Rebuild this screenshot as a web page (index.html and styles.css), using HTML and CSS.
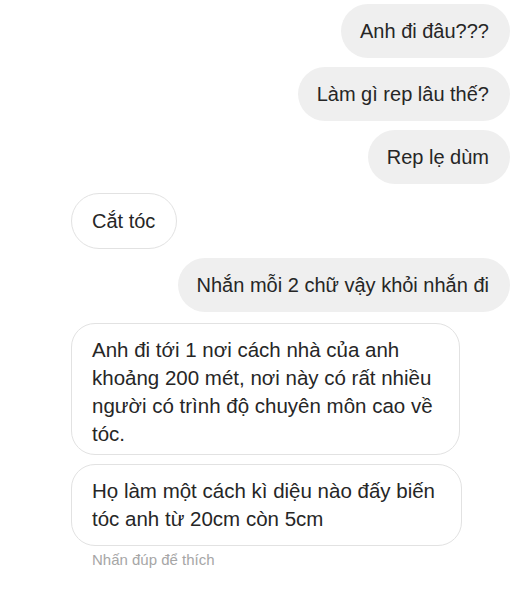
FILE: index.html
```html
<!DOCTYPE html>
<html lang="vi">
<head>
<meta charset="utf-8">
<link rel="stylesheet" href="styles.css">
</head>
<body>
<div class="chat">
  <div class="row out"><div class="bubble gray">Anh đi đâu???</div></div>
  <div class="row out"><div class="bubble gray">Làm gì rep lâu thế?</div></div>
  <div class="row out"><div class="bubble gray">Rep lẹ dùm</div></div>
  <div class="row in"><div class="bubble white">Cắt tóc</div></div>
  <div class="row out"><div class="bubble gray">Nhắn mỗi 2 chữ vậy khỏi nhắn đi</div></div>
  <div class="row in first-long">
    <div class="bubble white multi w1">
      <span class="ln">Anh đi tới 1 nơi cách nhà của anh</span>
      <span class="ln">khoảng 200 mét, nơi này có rất nhiều</span>
      <span class="ln">người có trình độ chuyên môn cao về</span>
      <span class="ln">tóc.</span>
    </div>
  </div>
  <div class="row in">
    <div class="bubble white multi w2">
      <span class="ln">Họ làm một cách kì diệu nào đấy biến</span>
      <span class="ln">tóc anh từ 20cm còn 5cm</span>
    </div>
  </div>
  <div class="hint">Nhấn đúp để thích</div>
</div>
</body>
</html>
```

FILE: styles.css
```css
html, body {
  margin: 0;
  padding: 0;
  background: #ffffff;
}
body {
  width: 526px;
  height: 590px;
  overflow: hidden;
  font-family: "Liberation Sans", Arial, sans-serif;
  color: #262626;
}
.chat {
  display: flex;
  flex-direction: column;
  gap: 9px;
  padding: 4px 16px 0 71px;
}
.row {
  display: flex;
}
.row.out {
  justify-content: flex-end;
}
.row.in {
  justify-content: flex-start;
}
.row.first-long {
  margin-top: 2px;
}
.bubble {
  font-size: 20px;
  line-height: 30px;
  height: 54px;
  padding: 12px 21px 12px 19px;
  border-radius: 28px;
  white-space: nowrap;
  box-sizing: border-box;
}
.bubble.gray {
  background: #efefef;
}
.bubble.white {
  background: #ffffff;
  border: 1px solid #e2e2e2;
  height: 56px;
  padding: 12px 21px 12px 20px;
}
.bubble.white.multi {
  font-size: 20.5px;
  border-radius: 24px;
  line-height: 28px;
  display: flex;
  flex-direction: column;
}
.ln {
  display: block;
  height: 28px;
}
.bubble.multi.w1 {
  width: 389px;
  height: 132px;
  padding: 12px 20px 6px;
}
.bubble.multi.w2 {
  width: 391px;
  height: 82px;
  padding: 12px 20px 12px;
}
.hint {
  font-size: 15px;
  line-height: 18px;
  color: #a6a6a6;
  padding-left: 21px;
  margin-top: -4px;
}
```
